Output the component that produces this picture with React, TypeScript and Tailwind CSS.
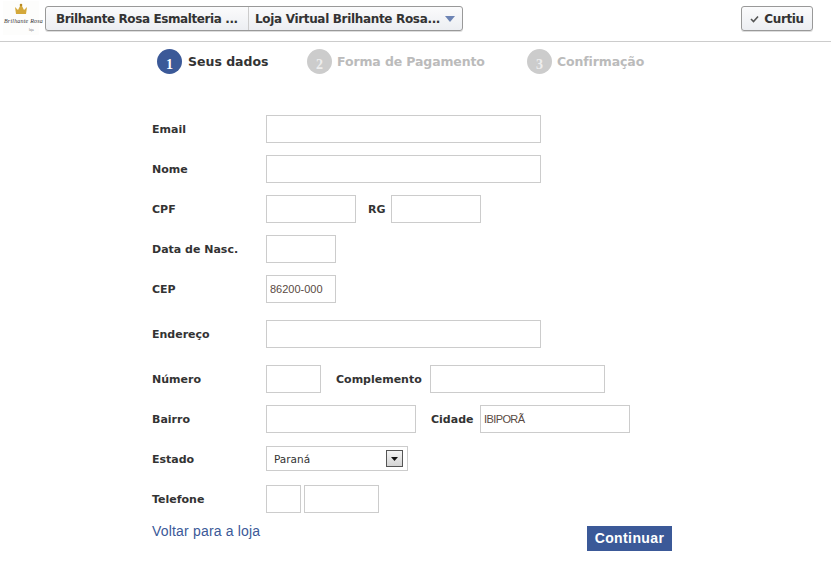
const label = "w-[114px] shrink-0 pt-[2px] font-['DejaVu_Sans'] font-bold text-[11px] text-[#333]";
const inlineLabel = "pt-[2px] font-['DejaVu_Sans'] font-bold text-[11px] text-[#333]";
const inputCls = "h-7 border border-[#ccc] bg-white px-[3px] font-['Liberation_Sans'] text-[11px] text-[#5a4a42] outline-none";

function Field({ className, value }: { className: string; value?: string }) {
  return <input readOnly defaultValue={value} className={`${inputCls} ${className}`} />;
}

function Step({ n, text, active, className }: { n: number; text: string; active?: boolean; className: string }) {
  return (
    <div className={`flex items-center ${className}`}>
      <span className={`w-[25px] h-[25px] rounded-full flex items-end justify-center pb-[2px] font-['Liberation_Serif'] font-bold text-[14px] leading-none ${active ? "bg-[#3b5998] text-white" : "bg-[#ccc] text-[#eee]"}`}>{n}</span>
      <span className={`pt-[2px] font-['DejaVu_Sans'] font-bold text-[12.5px] ${active ? "ml-[6px] text-[#333]" : "ml-[5px] tracking-[-0.12px] text-[#bbb]"}`}>{text}</span>
    </div>
  );
}

function Logo() {
  return (
    <div className="relative w-[36px] h-[34px] mt-[1px] ml-[1px] bg-[#fdfdfc]">
      <svg width="14" height="13" viewBox="0 0 14 13" className="absolute left-[11px] top-[2px]">
        <path d="M1 4l3 3 3-6 3 6 3-3-1 7H2z" fill="#d4a83a" />
        <circle cx="7" cy="2" r="1.3" fill="#b98a22" />
      </svg>
      <span className="absolute left-[1px] top-[16px] font-['Liberation_Serif'] italic text-[6px] leading-[8px] whitespace-nowrap tracking-[0.2px] text-[#333]">Brilhante Rosa</span>
      <span className="absolute left-[26px] top-[27px] font-['Liberation_Sans'] text-[3px] leading-[4px] text-[#777]">loja</span>
    </div>
  );
}

export default function App() {
  return (
    <div className="w-[831px] h-[564px] bg-white overflow-hidden relative">
      <header className="h-[42px] border-b border-[#ccc] flex items-start pl-[2px] pr-[18px]">
        <Logo />
        <div className="mt-[6px] ml-[6px] h-[25px] w-[418px] flex items-center rounded-[3px] border border-[#999] bg-gradient-to-b from-[#fbfbfc] to-[#eceef2] shadow-[0_1px_0_#ddd] font-['DejaVu_Sans'] font-bold text-[12px] tracking-[-0.4px] text-[#333]">
          <span className="w-[203px] h-full flex items-center pl-[10px] border-r border-[#ccc] whitespace-nowrap">Brilhante Rosa Esmalteria ...</span>
          <span className="pl-[6px] tracking-[-0.33px] whitespace-nowrap">Loja Virtual Brilhante Rosa...</span>
          <svg width="10" height="6" viewBox="0 0 10 6" className="ml-auto mr-[7px]"><path d="M0 0h10L5 6z" fill="#6d84b4" /></svg>
        </div>
        <div className="ml-auto mt-[6px] h-[25px] w-[72px] flex items-center justify-center gap-[5px] rounded-[3px] border border-[#999] bg-gradient-to-b from-[#fbfbfc] to-[#eceef2] shadow-[0_1px_0_#ddd] font-['DejaVu_Sans'] font-bold text-[12px] tracking-[-0.4px] text-[#333]">
          <svg width="9" height="8" viewBox="0 0 9 8"><path d="M1 4l2.5 2.5L8 1.5" fill="none" stroke="#555" strokeWidth="1.6" /></svg>
          Curtiu
        </div>
      </header>

      <div className="flex pt-[7px] pl-[157px]">
        <Step n={1} text="Seus dados" active className="w-[150px]" />
        <Step n={2} text="Forma de Pagamento" className="w-[220px]" />
        <Step n={3} text="Confirmação" className="" />
      </div>

      <form className="pl-[152px] pt-[41px] flex flex-col">
        <div className="flex items-center">
          <span className={label}>Email</span>
          <Field className="w-[275px]" />
        </div>
        <div className="flex items-center mt-3">
          <span className={label}>Nome</span>
          <Field className="w-[275px]" />
        </div>
        <div className="flex items-center mt-3">
          <span className={label}>CPF</span>
          <Field className="w-[90px]" />
          <span className={`${inlineLabel} ml-3 w-[23px]`}>RG</span>
          <Field className="w-[90px]" />
        </div>
        <div className="flex items-center mt-3">
          <span className={label}>Data de Nasc.</span>
          <Field className="w-[70px]" />
        </div>
        <div className="flex items-center mt-3">
          <span className={label}>CEP</span>
          <Field className="w-[70px]" value="86200-000" />
        </div>
        <div className="flex items-center mt-[17px]">
          <span className={label}>Endereço</span>
          <Field className="w-[275px]" />
        </div>
        <div className="flex items-center mt-[17px]">
          <span className={label}>Número</span>
          <Field className="w-[55px]" />
          <span className={`${inlineLabel} ml-[15px] w-[94px]`}>Complemento</span>
          <Field className="w-[175px]" />
        </div>
        <div className="flex items-center mt-3">
          <span className={label}>Bairro</span>
          <Field className="w-[150px]" />
          <span className={`${inlineLabel} ml-[15px] w-[49px]`}>Cidade</span>
          <Field className="w-[150px] tracking-[-0.6px]" value="IBIPORÃ" />
        </div>
        <div className="flex items-center mt-[13px]">
          <span className={`${label} pt-[4px]`}>Estado</span>
          <div className="w-[142px] h-[25px] border border-[#ccc] flex items-center pl-[7px] pr-[4px] font-['DejaVu_Sans'] text-[10.5px] text-[#333]">
            <span className="pt-[2px]">Paraná</span>
            <span className="ml-auto w-[17px] h-[17px] border border-[#555] bg-gradient-to-b from-[#f4f4f4] to-[#d4d4d4] flex items-center justify-center">
              <svg width="7" height="4" viewBox="0 0 7 4"><path d="M0 0h7L3.5 4z" fill="#111" /></svg>
            </span>
          </div>
        </div>
        <div className="flex items-center mt-[14px]">
          <span className={label}>Telefone</span>
          <Field className="w-[35px]" />
          <Field className="w-[75px] ml-[3px]" />
        </div>
        <div className="flex items-start w-[520px] justify-between">
          <a className="mt-[10px] font-['Liberation_Sans'] text-[14px] leading-4 tracking-[0.18px] text-[#3b5998]">Voltar para a loja</a>
          <button type="button" className="mt-[13px] w-[85px] h-[25px] bg-[#3b5998] text-white font-['Liberation_Sans'] font-bold text-[14px] tracking-[0.4px]">Continuar</button>
        </div>
      </form>
    </div>
  );
}
